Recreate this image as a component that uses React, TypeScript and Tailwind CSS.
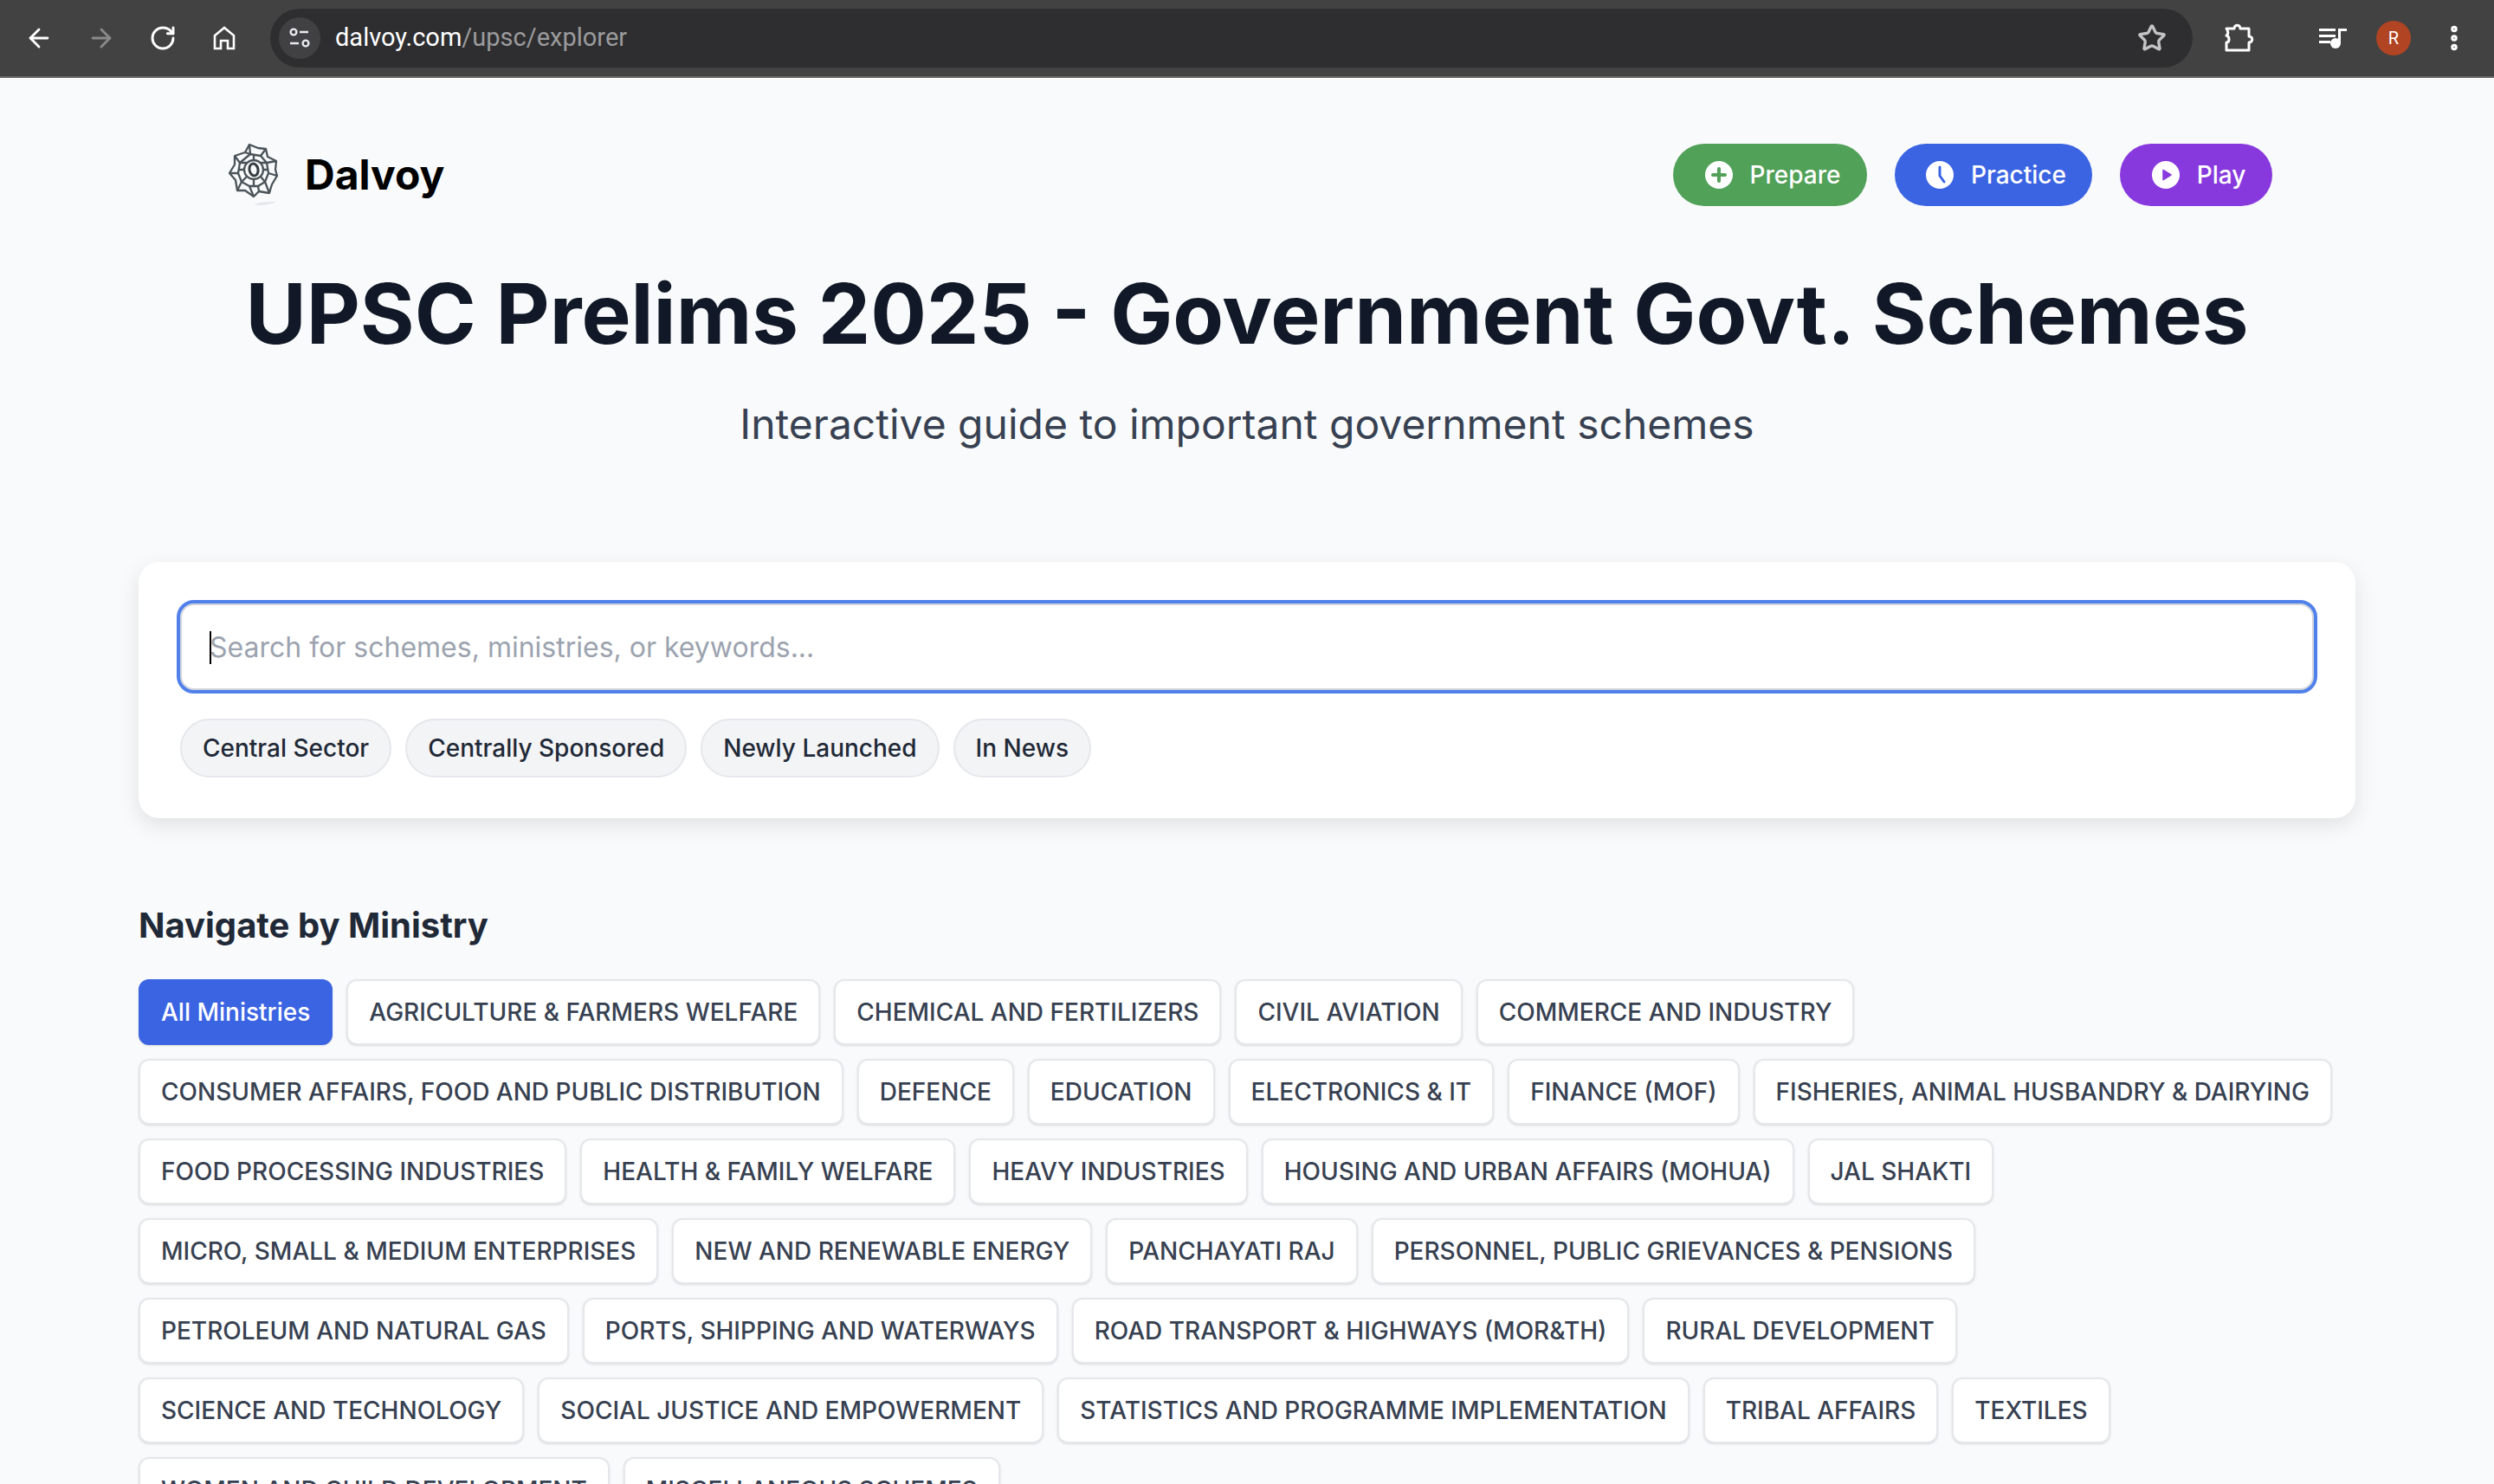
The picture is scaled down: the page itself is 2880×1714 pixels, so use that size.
import { ArrowLeft, ArrowRight, RotateCw, Star, MoreVertical } from 'lucide-react';

const ministryRows = [
  'AGRICULTURE & FARMERS WELFARE',
  'CHEMICAL AND FERTILIZERS',
  'CIVIL AVIATION',
  'COMMERCE AND INDUSTRY',
  'CONSUMER AFFAIRS, FOOD AND PUBLIC DISTRIBUTION',
  'DEFENCE',
  'EDUCATION',
  'ELECTRONICS & IT',
  'FINANCE (MOF)',
  'FISHERIES, ANIMAL HUSBANDRY & DAIRYING',
  'FOOD PROCESSING INDUSTRIES',
  'HEALTH & FAMILY WELFARE',
  'HEAVY INDUSTRIES',
  'HOUSING AND URBAN AFFAIRS (MOHUA)',
  'JAL SHAKTI',
  'MICRO, SMALL & MEDIUM ENTERPRISES',
  'NEW AND RENEWABLE ENERGY',
  'PANCHAYATI RAJ',
  'PERSONNEL, PUBLIC GRIEVANCES & PENSIONS',
  'PETROLEUM AND NATURAL GAS',
  'PORTS, SHIPPING AND WATERWAYS',
  'ROAD TRANSPORT & HIGHWAYS (MOR&TH)',
  'RURAL DEVELOPMENT',
  'SCIENCE AND TECHNOLOGY',
  'SOCIAL JUSTICE AND EMPOWERMENT',
  'STATISTICS AND PROGRAMME IMPLEMENTATION',
  'TRIBAL AFFAIRS',
  'TEXTILES',
  'WOMEN AND CHILD DEVELOPMENT',
  'MISCELLANEOUS SCHEMES',
];

const chips = ['Central Sector', 'Centrally Sponsored', 'Newly Launched', 'In News'];

function Logo() {
  return (
    <svg width="64" height="80" viewBox="6 4 64 80" fill="none" stroke="#4a5359" strokeWidth="2.3" strokeLinejoin="round">
      <ellipse cx="50" cy="77" rx="12" ry="1.4" fill="#e4e5e8" stroke="none" transform="rotate(-6 50 77)" />
      <path d="M32 9l10 4 9 1 2 9 10 5-1 10 2 7-6 10-3 10-12-2-6 6-10-7-9 0-2-12-7-8 6-10 0-10 12-4z" />
      <path d="M33 20l12 2 7 8 2 12-4 10-8 5H32l-9-5-4-10 2-12z" />
      <path d="M32 9l1 11M51 14l-6 8M63 28l-11 2M64 45l-10-3M55 65l-5-13M43 63l-1-6M37 69l-5-12M18 62l5-10M9 42h10M15 22l6 8M27 18l6 2" />
      <ellipse cx="37" cy="38" rx="11" ry="11" />
      <path d="M26 38H19M48 38h6M37 27v-7M37 49v8M29 30l-8 0M45 30l7 0M29 46l-6 6M45 46l5 6" />
      <ellipse cx="37" cy="38" rx="5" ry="7" strokeWidth="3" transform="rotate(-12 37 38)" stroke="#353c41" />
    </svg>
  );
}

function ToolbarHome() {
  return (
    <svg width="26" height="28" viewBox="0 0 26 28" fill="none" stroke="#fff" strokeWidth="2.6" strokeLinejoin="miter">
      <path d="M2 26V11L13 2l11 9v15h-7v-9H9v9z" />
    </svg>
  );
}

function SiteInfo() {
  return (
    <svg width="26" height="24" viewBox="0 0 26 24" fill="none" stroke="#e8eaed" strokeWidth="2.4">
      <circle cx="6" cy="5" r="3.4" />
      <path d="M13 5h10M2 18h10" />
      <circle cx="20" cy="18" r="3.4" />
    </svg>
  );
}

function Extensions() {
  return (
    <svg width="36" height="34" viewBox="0 0 36 34" fill="none" stroke="#fff" strokeWidth="3" strokeLinejoin="round">
      <path d="M3 6h9c0-5 7-5 7 0h10v9c5 0 5 7 0 7v9H3v-9c4 0 4-7 0-8 3-2 2-5 0-8z" />
    </svg>
  );
}

function MediaControl() {
  return (
    <svg width="32" height="24" viewBox="0 0 32 24" fill="#fff">
      <path d="M0 1h19v3H0zM0 8h19v3H0zM0 15h13v3H0z" />
      <path d="M22 1h10v3h-7v14h-3z" />
      <circle cx="19" cy="18" r="6" />
    </svg>
  );
}

function PrepareIcon() {
  return (
    <svg width="32" height="32" viewBox="0 0 32 32">
      <circle cx="16" cy="16" r="16" fill="#fff" />
      <path d="M16 9v14M9 16h14" stroke="#51a158" strokeWidth="4" strokeLinecap="round" />
    </svg>
  );
}

function PracticeIcon() {
  return (
    <svg width="32" height="32" viewBox="0 0 32 32">
      <circle cx="16" cy="16" r="16" fill="#fff" />
      <path d="M16 7v10l5 7" fill="none" stroke="#3b64e3" strokeWidth="3" strokeLinecap="round" strokeLinejoin="round" />
    </svg>
  );
}

function PlayIcon() {
  return (
    <svg width="32" height="32" viewBox="0 0 32 32">
      <circle cx="16" cy="16" r="16" fill="#fff" />
      <path d="M13 10.5l9 5.5-9 5.5z" fill="#8839de" stroke="#8839de" strokeWidth="1.5" strokeLinejoin="round" />
    </svg>
  );
}

function Toolbar() {
  return (
    <div className="flex h-[90px] items-center border-b-2 border-[#676767] bg-[#424242] font-['Roboto',sans-serif]">
      <div className="flex w-[312px] shrink-0 items-center pl-[28px]">
        <ArrowLeft className="w-[34px] h-[34px] text-white" strokeWidth={2} />
        <ArrowRight className="ml-[38px] w-[34px] h-[34px] text-[#8a8a8a]" strokeWidth={2} />
        <RotateCw className="ml-[38px] w-[32px] h-[32px] text-white" strokeWidth={2.2} />
        <div className="ml-[42px]">
          <ToolbarHome />
        </div>
      </div>
      <div className="flex h-[68px] w-[2220px] items-center rounded-full bg-[#2e2e30] pl-[10px] pr-[30px]">
        <div className="flex h-[48px] w-[48px] items-center justify-center rounded-full bg-[#414143]">
          <SiteInfo />
        </div>
        <div className="ml-[17px] flex-1 text-[29px] text-white">
          dalvoy.com<span className="text-[#9b9b9d]">/upsc/explorer</span>
        </div>
        <Star className="w-[34px] h-[34px] text-[#c4c4c4]" strokeWidth={2.4} />
      </div>
      <div className="flex flex-1 items-center pl-[36px]">
        <Extensions />
        <div className="ml-[74px]">
          <MediaControl />
        </div>
        <div className="ml-[34px] flex h-[40px] w-[40px] items-center justify-center rounded-full bg-[#b04423] text-[20px] text-white">
          R
        </div>
        <MoreVertical className="ml-[32px] w-[36px] h-[36px] text-white" strokeWidth={3} />
      </div>
    </div>
  );
}

export default function App() {
  return (
    <div className="h-[1714px] overflow-hidden bg-[#f9fafb] font-['Inter','Liberation_Sans',sans-serif]">
      <Toolbar />

      <div className="flex items-center justify-between pl-[262px] pr-[256px] pt-[72px]">
        <div className="flex items-center gap-[26px]">
          <Logo />
          <span className="text-[48px] font-bold leading-none text-black">Dalvoy</span>
        </div>
        <div className="flex gap-[32px]">
          <a className="flex h-[72px] w-[224px] items-center justify-center gap-[20px] rounded-full bg-[#51a158] pl-[6px] text-[28px] font-medium text-white">
            <PrepareIcon />
            Prepare
          </a>
          <a className="flex h-[72px] w-[228px] items-center justify-center gap-[20px] rounded-full bg-[#3b64e3] pl-[6px] text-[28px] font-medium text-white">
            <PracticeIcon />
            Practice
          </a>
          <a className="flex h-[72px] w-[176px] items-center justify-center gap-[20px] rounded-full bg-[#8839de] pl-[6px] text-[28px] font-medium text-white">
            <PlayIcon />
            Play
          </a>
        </div>
      </div>

      <h1 className="mt-[60px] text-center text-[96px] font-bold leading-[120px] text-[#111827]">
        UPSC Prelims 2025 - Government Govt. Schemes
      </h1>
      <p className="mt-[38px] text-center text-[48px] leading-[60px] text-[#374151]">
        Interactive guide to important government schemes
      </p>

      <div className="mx-[160px] mt-[129px] rounded-[24px] bg-white px-[48px] pt-[48px] pb-[47px] shadow-[0_8px_24px_rgba(0,0,0,0.1)]">
        <div className="relative">
          <input
            readOnly
            placeholder="Search for schemes, ministries, or keywords..."
            className="block h-[100px] w-full rounded-[16px] border-2 border-[#d1d5db] bg-white px-[32px] text-[32px] outline-4 outline-[#5080ea] placeholder:text-[#9ca3af]"
          />
          <span className="absolute left-[34px] top-[32px] h-[38px] w-[2px] bg-black" />
        </div>
        <div className="mt-[33px] flex gap-[16px]">
          {chips.map((c) => (
            <span
              key={c}
              className="flex h-[68px] items-center rounded-full border-2 border-[#e5e7eb] bg-[#f3f4f6] px-[24px] text-[28px] font-medium text-[#1f2937]"
            >
              {c}
            </span>
          ))}
        </div>
      </div>

      <div className="mx-[160px]">
        <h2 className="mt-[96px] text-[40px] font-bold leading-[56px] text-[#1f2937]">Navigate by Ministry</h2>
        <div className="mt-[34px] flex flex-wrap gap-[16px]">
          <button className="flex h-[76px] items-center rounded-[12px] border-2 border-[#3b64e3] bg-[#3b64e3] px-[24px] text-[28px] font-medium text-white shadow-sm">
            All Ministries
          </button>
          {ministryRows.map((m) => (
            <button
              key={m}
              className="flex h-[76px] items-center rounded-[12px] border-2 border-[#e5e7eb] bg-white px-[24px] text-[28px] font-medium text-[#374151] shadow-sm"
            >
              {m}
            </button>
          ))}
        </div>
      </div>
    </div>
  );
}
